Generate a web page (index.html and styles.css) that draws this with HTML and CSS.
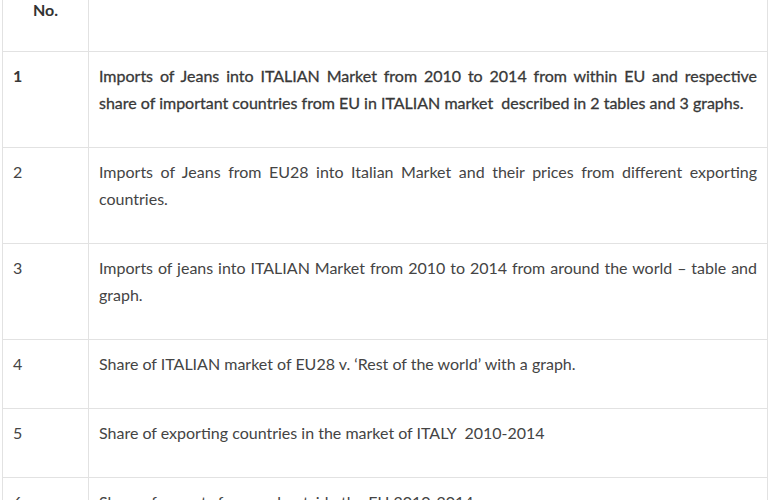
FILE: index.html
```html
<!DOCTYPE html>
<html>
<head>
<meta charset="utf-8">
<link rel="stylesheet" href="styles.css">
</head>
<body>
<table class="contents">
  <tr class="head">
    <th class="num">No.</th>
    <th class="desc"></th>
  </tr>
  <tr class="strong">
    <td class="num">1</td>
    <td class="desc">Imports of Jeans into ITALIAN Market from 2010 to 2014 from within EU and respective share of important countries from EU in ITALIAN market&nbsp; described in 2 tables and 3 graphs.</td>
  </tr>
  <tr>
    <td class="num">2</td>
    <td class="desc">Imports of Jeans from EU28 into Italian Market and their prices from different exporting countries.</td>
  </tr>
  <tr>
    <td class="num">3</td>
    <td class="desc">Imports of jeans into ITALIAN Market from 2010 to 2014 from around the world – table and graph.</td>
  </tr>
  <tr>
    <td class="num">4</td>
    <td class="desc">Share of ITALIAN market of EU28 v. ‘Rest of the world’ with a graph.</td>
  </tr>
  <tr>
    <td class="num">5</td>
    <td class="desc">Share of exporting countries in the market of ITALY&nbsp; 2010-2014</td>
  </tr>
  <tr>
    <td class="num">6</td>
    <td class="desc">Share of exports from and outside the EU 2010-2014</td>
  </tr>
</table>
</body>
</html>
```

FILE: styles.css
```css
html, body {
  margin: 0;
  padding: 0;
  background: #ffffff;
  overflow: hidden;
}

body {
  font-family: Lato, "Liberation Sans", sans-serif;
  font-size: 16px;
  color: #444444;
}

.contents {
  border-collapse: collapse;
  margin-left: 2px;
  width: 766px;
  table-layout: fixed;
}

.contents td,
.contents th {
  border: 1px solid #e2e2e2;
  vertical-align: top;
  line-height: 27px;
  padding: 10px 10px 31px 10px;
  text-align: left;
}

.contents .head th {
  border-top: none;
  height: 51px;
  box-sizing: border-box;
  padding: 0 10px;
  line-height: 20px;
  font-weight: bold;
  color: #333333;
}

.contents .head th.num {
  text-align: center;
}

.contents td.num {
  width: 86px;
}

.contents th.num {
  width: 86px;
}

.contents td.desc {
  text-align: justify;
}

.strong td {
  color: #383838;
  -webkit-text-stroke: 0.3px #383838;
}

.strong td.num {
  font-weight: bold;
  -webkit-text-stroke: 0;
}
```
